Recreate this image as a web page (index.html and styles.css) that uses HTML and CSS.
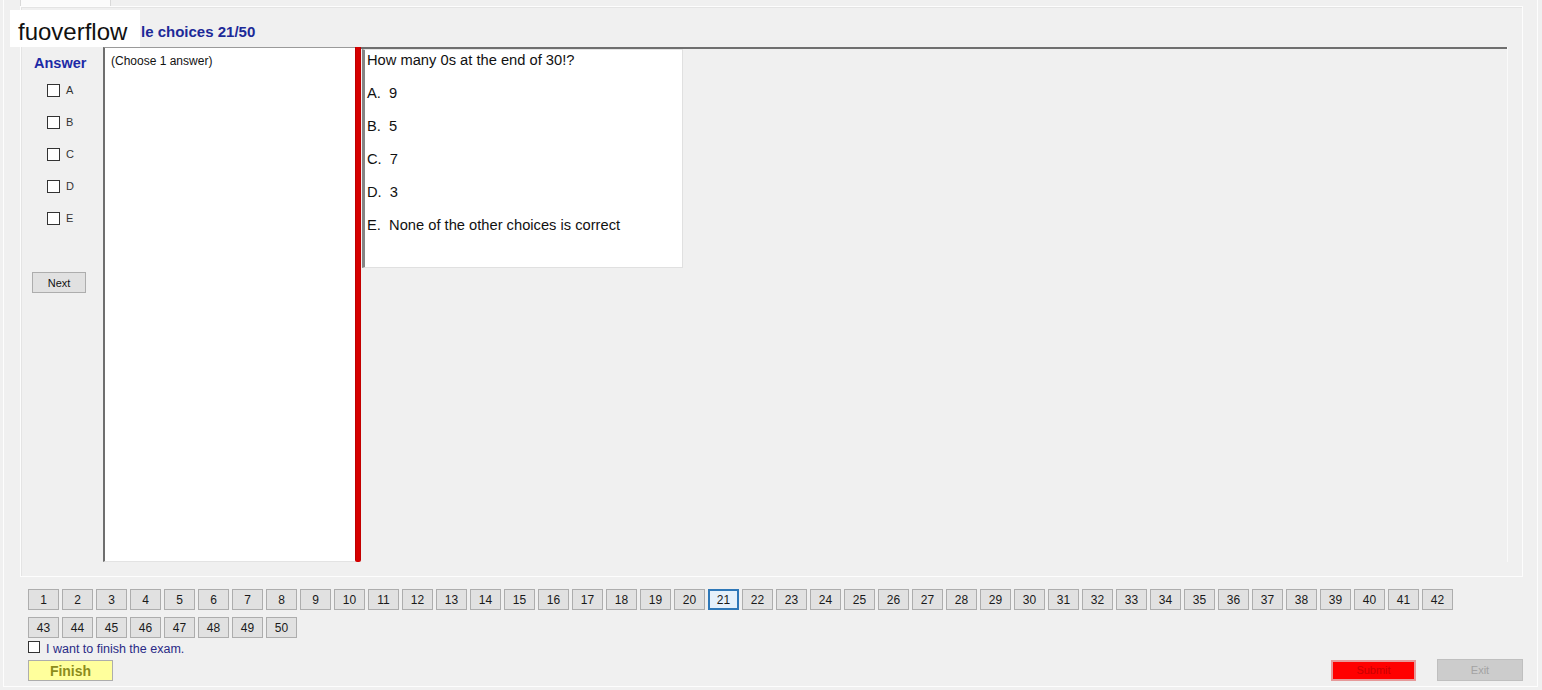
FILE: index.html
```html
<!DOCTYPE html>
<html>
<head>
<meta charset="utf-8">
<title>Exam</title>
<link rel="stylesheet" href="styles.css">
</head>
<body>
<div class="frame">
  <div class="tabstrip"><div class="tab"></div></div>
  <div class="main">
    <div class="titlebar"><span class="title">le choices 21/50</span></div>
    <div class="content">
      <div class="answers">
        <div class="answer-head">Answer</div>
        <label class="opt"><span class="box"></span><span>A</span></label>
        <label class="opt"><span class="box"></span><span>B</span></label>
        <label class="opt"><span class="box"></span><span>C</span></label>
        <label class="opt"><span class="box"></span><span>D</span></label>
        <label class="opt"><span class="box"></span><span>E</span></label>
        <button class="next">Next</button>
      </div>
      <div class="choose">(Choose 1 answer)</div>
      <div class="splitter"></div>
      <div class="qpane">
        <div class="qbox">
          <p class="q">How many 0s at the end of 30!?</p>
          <p class="a">A.  9</p>
          <p class="a">B.  5</p>
          <p class="a">C.  7</p>
          <p class="a">D.  3</p>
          <p class="a">E.  None of the other choices is correct</p>
        </div>
      </div>
    </div>
  </div>
  <div class="nav">
    <button class="num">1</button><button class="num">2</button><button class="num">3</button><button class="num">4</button><button class="num">5</button><button class="num">6</button><button class="num">7</button><button class="num">8</button><button class="num">9</button><button class="num">10</button>
    <button class="num">11</button><button class="num">12</button><button class="num">13</button><button class="num">14</button><button class="num">15</button><button class="num">16</button><button class="num">17</button><button class="num">18</button><button class="num">19</button><button class="num">20</button>
    <button class="num current">21</button><button class="num">22</button><button class="num">23</button><button class="num">24</button><button class="num">25</button><button class="num">26</button><button class="num">27</button><button class="num">28</button><button class="num">29</button><button class="num">30</button>
    <button class="num">31</button><button class="num">32</button><button class="num">33</button><button class="num">34</button><button class="num">35</button><button class="num">36</button><button class="num">37</button><button class="num">38</button><button class="num">39</button><button class="num">40</button>
    <button class="num">41</button><button class="num">42</button><button class="num">43</button><button class="num">44</button><button class="num">45</button><button class="num">46</button><button class="num">47</button><button class="num">48</button><button class="num">49</button><button class="num">50</button>
  </div>
  <label class="finish-check"><span class="box"></span><span>I want to finish the exam.</span></label>
  <div class="actions">
    <button class="finish">Finish</button>
    <div class="right">
      <button class="submit">Submit</button>
      <button class="exit">Exit</button>
    </div>
  </div>
</div>
<div class="watermark">fuoverflow</div>
</body>
</html>
```
FILE: styles.css
```css
* { box-sizing: border-box; }
html, body { margin: 0; padding: 0; }
body {
  width: 1542px;
  height: 690px;
  overflow: hidden;
  background: #f0f0f0;
  font-family: "Liberation Sans", Arial, sans-serif;
  position: relative;
}
.frame {
  margin-left: 3px;
  width: 1535px;
  height: 687px;
  border-left: 1px solid #fdfdfd;
  border-right: 1px solid #fdfdfd;
  border-bottom: 1px solid #fdfdfd;
}
.tabstrip { height: 6px; display: flex; }
.tab {
  margin-left: 16px;
  width: 91px;
  height: 6px;
  background: #fbfbfb;
  border-left: 1px solid #d9d9d9;
  border-right: 1px solid #d9d9d9;
}
.main {
  margin-left: 16px;
  width: 1503px;
  height: 571px;
  border: 1px solid #fdfdfd;
  box-shadow: inset 1px 1px 0 #e4e4e4;
}
.titlebar {
  height: 40px;
  padding-left: 120px;
  padding-top: 16px;
}
.title {
  font-weight: bold;
  font-size: 15px;
  line-height: 18px;
  color: #1d2a98;
}
.content {
  display: flex;
  height: 515px;
  margin-right: 14px;
  border-right: 1px solid #fafafa;
}
.answers {
  width: 82px;
  display: flex;
  flex-direction: column;
  align-items: flex-start;
}
.answer-head {
  padding-top: 8px;
  padding-left: 13px;
  font-weight: bold;
  font-size: 14.5px;
  line-height: 16px;
  color: #1d2aa6;
}
.opt {
  display: flex;
  align-items: center;
  gap: 6px;
  margin-left: 26px;
  margin-top: 13px;
  height: 13px;
  font-size: 11px;
  line-height: 12px;
  color: #333;
}
.opt + .opt { margin-top: 19px; }
.opt span:last-child { margin-top: -2px; }
.box {
  display: inline-block;
  width: 13px;
  height: 13px;
  background: #fff;
  border: 1px solid #333;
  flex: none;
}
.next {
  margin-top: 47px;
  margin-left: 11px;
  width: 54px;
  height: 21px;
  padding: 0;
  background: #e1e1e1;
  border: 1px solid #adadad;
  font-family: "Liberation Sans", Arial, sans-serif;
  font-size: 11px;
  color: #111;
}
.choose {
  width: 252px;
  background: #fff;
  border-left: 2px solid #6e6e6e;
  border-top: 1px solid #9a9a9a;
  border-bottom: 1px solid #e3e3e3;
  padding: 6px 6px;
  font-size: 12px;
  line-height: 14px;
  color: #111;
}
.splitter {
  width: 6px;
  background: linear-gradient(to right, #a40000 0, #d60000 1px, #d60000 5px, #b00000 6px);
  border-bottom-left-radius: 2px;
  border-bottom-right-radius: 2px;
}
.qpane {
  flex: 1;
  border-top: 2px solid #6f6f6f;
}
.qbox {
  margin-left: 1px;
  width: 321px;
  height: 219px;
  background: #fff;
  border-left: 3px solid #858585;
  border-top: 1px solid #e6e6e6;
  border-right: 1px solid #e0e0e0;
  border-bottom: 1px solid #e0e0e0;
  padding: 1px 2px 0 2px;
  font-size: 14.7px;
  color: #111;
}
.qbox p {
  margin: 0;
  line-height: 18px;
  white-space: pre;
}
.qbox p.a { margin-top: 15px; }
.nav {
  margin-top: 12px;
  margin-left: 24px;
  width: 1428px;
  display: flex;
  flex-wrap: wrap;
  gap: 7px 3px;
}
.num {
  width: 31px;
  height: 21px;
  padding: 0;
  background: #e1e1e1;
  border: 1px solid #adadad;
  font-family: "Liberation Sans", Arial, sans-serif;
  font-size: 12px;
  color: #1a1a1a;
}
.num.current {
  border: 2px solid #2f78b8;
  background: #e5f1fb;
}
.finish-check {
  margin-top: 3px;
  margin-left: 24px;
  display: flex;
  align-items: center;
  gap: 6px;
  height: 12px;
  font-size: 12.5px;
  line-height: 14px;
  color: #2a2a86;
}
.finish-check span:last-child { margin-top: 3px; }
.finish-check .box { width: 12px; height: 12px; }
.actions {
  margin-top: 6px;
  margin-left: 24px;
  margin-right: 14px;
  display: flex;
  justify-content: space-between;
  align-items: center;
}
.finish {
  width: 85px;
  height: 21px;
  padding: 2px 0 0 0;
  background: #ffff9c;
  border: 1px solid #adadad;
  font-family: "Liberation Sans", Arial, sans-serif;
  font-weight: bold;
  font-size: 14px;
  color: #8c8c1c;
}
.right { display: flex; align-items: center; gap: 21px; }
.submit {
  width: 85px;
  height: 21px;
  padding: 0;
  background: #ff0000;
  border: 2px solid #e69a9a;
  font-family: "Liberation Sans", Arial, sans-serif;
  font-size: 11px;
  color: #c80000;
}
.exit {
  width: 86px;
  height: 22px;
  padding: 0;
  background: #cccccc;
  border: 1px solid #bfbfbf;
  font-family: "Liberation Sans", Arial, sans-serif;
  font-size: 11px;
  color: #a3a3a3;
}
.watermark {
  position: absolute;
  left: 10px;
  top: 10px;
  width: 130px;
  height: 37px;
  background: #fff;
  padding-left: 8px;
  font-size: 24px;
  line-height: 43px;
  overflow: hidden;
  color: #111;
}
```
